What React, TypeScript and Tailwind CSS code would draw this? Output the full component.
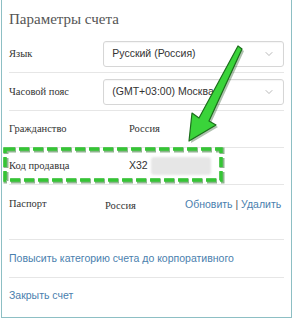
import { ChevronDown } from "lucide-react";

const serif = { fontFamily: '"Liberation Serif", "DejaVu Serif", serif' };

function Select({ value }: { value: string }) {
  return (
    <div className="flex h-[26px] w-[182px] items-center justify-between overflow-hidden rounded-[3px] border border-[#d6d6d6] bg-white pl-[8px] pr-[8px] shadow-[inset_0_1px_1px_rgba(0,0,0,0.04)]">
      <span className="min-w-0 flex-1 overflow-hidden whitespace-nowrap font-['Liberation_Sans',sans-serif] text-[10.5px] text-[#333]">
        {value}
      </span>
      <ChevronDown size={12} strokeWidth={1.2} className="ml-[6px] shrink-0 text-[#888]" />
    </div>
  );
}

export default function App() {
  return (
    <div className="h-[320px] w-[294px] bg-white pl-px">
      <div className="relative h-[318px] w-[291px] border-x border-b border-[#8dbfc4] bg-white">
        <div className="px-[7px]">
          <h1 style={serif} className="h-[36px] pt-[9px] text-[15px] leading-[20px] text-[#555]">
            Параметры счета
          </h1>

          <div className="flex h-[37px] items-center border-b border-[#e6e6e6]">
            <span style={serif} className="w-[95px] text-[10.5px] text-[#333]">Язык</span>
            <Select value="Русский (Россия)" />
          </div>

          <div className="flex h-[38px] items-center border-b border-[#e6e6e6]">
            <span style={serif} className="w-[95px] text-[10.5px] text-[#333]">Часовой пояс</span>
            <Select value="(GMT+03:00) Москва" />
          </div>

          <div className="flex h-[37px] items-center border-b border-[#e6e6e6]">
            <span style={serif} className="w-[120px] text-[10.5px] text-[#333]">Гражданство</span>
            <span style={serif} className="text-[10.5px] text-[#333]">Россия</span>
          </div>

          <div className="flex h-[37px] items-center border-b border-[#e6e6e6]">
            <span style={serif} className="w-[120px] text-[10.5px] text-[#333]">Код продавца</span>
            <span className="font-['Liberation_Sans',sans-serif] text-[10.5px] text-[#333]">X32</span>
            <span className="ml-[3px] h-[18px] w-[60px] rounded-[3px] bg-[#e6e6e6] blur-[1px]" />
          </div>

          <div className="flex h-[55px] items-start border-b border-[#e6e6e6] pt-[12px]">
            <span style={serif} className="w-[96px] text-[10.5px] leading-[14px] text-[#333]">Паспорт</span>
            <span style={serif} className="mt-[2px] w-[80px] text-[10.5px] leading-[14px] text-[#333]">Россия</span>
            <span className="whitespace-nowrap font-['Liberation_Sans',sans-serif] text-[10.5px] leading-[14px] text-[#4a80ae]">
              Обновить <span className="text-[#555]">|</span> Удалить
            </span>
          </div>

          <div className="flex h-[38px] items-center border-b border-[#e6e6e6]">
            <span className="font-['Liberation_Sans',sans-serif] text-[10.5px] text-[#4a80ae]">
              Повысить категорию счета до корпоративного
            </span>
          </div>

          <div className="flex h-[36px] items-center">
            <span className="font-['Liberation_Sans',sans-serif] text-[10.5px] text-[#4a80ae]">
              Закрыть счет
            </span>
          </div>
        </div>

        {/* dashed highlight */}
        <svg className="absolute left-0 top-[146px]" width="224" height="38" viewBox="0 0 224 38">
          <rect x="3" y="3" width="216" height="31" fill="none" stroke="#1f6b1f" strokeWidth="5" strokeDasharray="10 4" opacity="0.5" transform="translate(1 1)" />
          <rect x="3" y="3" width="216" height="31" fill="none" stroke="#35c535" strokeWidth="3.5" strokeDasharray="10 4" />
        </svg>

        {/* arrow */}
        <svg className="absolute left-[174px] top-[40px]" width="75" height="110" viewBox="0 0 75 110">
          <path d="M62 6 L66 9 L33 81 L40 85 L13 101 L16 73 L23 78 Z" fill="#1a4d1a" opacity="0.35" transform="translate(2 2)" />
          <path d="M62 6 L66 9 L33 81 L40 85 L13 101 L16 73 L23 78 Z" fill="#3ad43a" stroke="#1b6e1b" strokeWidth="1.2" strokeLinejoin="round" />
        </svg>
      </div>
    </div>
  );
}
